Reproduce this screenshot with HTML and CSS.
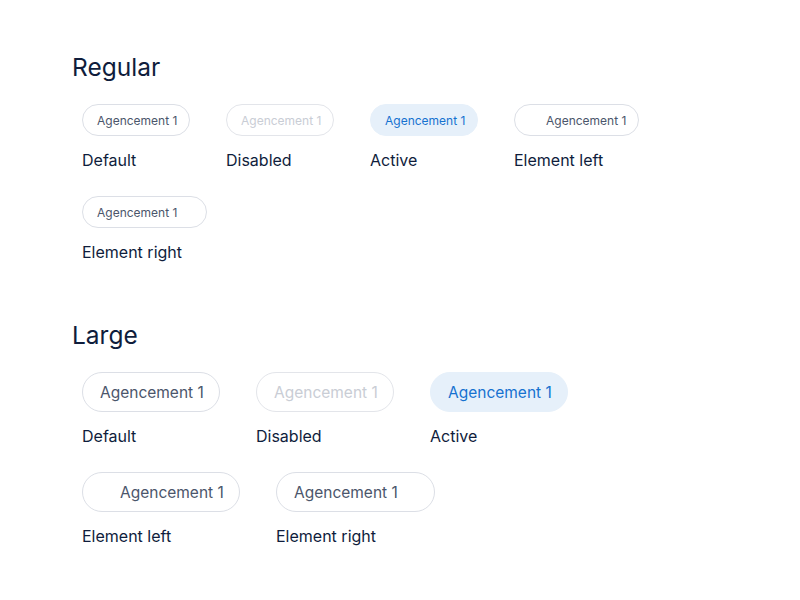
FILE: index.html
```html
<!DOCTYPE html>
<html lang="fr">
<head>
<meta charset="utf-8">
<title>Chips</title>
<link rel="stylesheet" href="styles.css">
</head>
<body>
<main class="page">
  <section class="section">
    <h2 class="title">Regular</h2>
    <div class="grid">
      <div class="item"><span class="chip">Agencement 1</span><span class="label">Default</span></div>
      <div class="item"><span class="chip chip-disabled">Agencement 1</span><span class="label">Disabled</span></div>
      <div class="item"><span class="chip chip-active">Agencement 1</span><span class="label">Active</span></div>
      <div class="item"><span class="chip chip-left">Agencement 1</span><span class="label">Element left</span></div>
      <div class="item"><span class="chip chip-right">Agencement 1</span><span class="label">Element right</span></div>
    </div>
  </section>
  <section class="section section-large">
    <h2 class="title">Large</h2>
    <div class="grid">
      <div class="item"><span class="chip chip-lg">Agencement 1</span><span class="label">Default</span></div>
      <div class="item"><span class="chip chip-lg chip-disabled">Agencement 1</span><span class="label">Disabled</span></div>
      <div class="item"><span class="chip chip-lg chip-active">Agencement 1</span><span class="label">Active</span></div>
      <div class="item"><span class="chip chip-lg chip-left">Agencement 1</span><span class="label">Element left</span></div>
      <div class="item"><span class="chip chip-lg chip-right">Agencement 1</span><span class="label">Element right</span></div>
    </div>
  </section>
</main>
</body>
</html>
```
FILE: styles.css
```css
html, body {
  margin: 0;
  padding: 0;
  background: #ffffff;
}
body {
  font-family: "Inter", "Liberation Sans", sans-serif;
  color: #0f1d3c;
}
.page {
  padding: 51px 72px 0 72px;
}
.section-large {
  margin-top: 57px;
}
.title {
  margin: 0;
  font-size: 24.5px;
  line-height: 32px;
  font-weight: 400;
  color: #0f1d3c;
}
.grid {
  margin-top: 21px;
  padding-left: 10px;
  width: 600px;
  display: flex;
  flex-wrap: wrap;
  column-gap: 36px;
  row-gap: 26px;
}
.item {
  display: flex;
  flex-direction: column;
  align-items: flex-start;
}
.chip {
  box-sizing: border-box;
  display: inline-flex;
  align-items: center;
  justify-content: flex-start;
  width: 108px;
  height: 32px;
  padding: 0 0 0 14px;
  border: 1px solid #dcdfe6;
  border-radius: 16px;
  font-size: 12px;
  color: #4b566b;
  white-space: nowrap;
  background: #fff;
}
.chip-disabled {
  color: #c9cdd5;
  border-color: #e3e5ea;
}
.chip-active {
  background: #e6f0fa;
  border-color: #e6f0fa;
  color: #1672d0;
}
.chip-left {
  width: 125px;
  padding-left: 31px;
}
.chip-right {
  width: 125px;
}
.chip-lg {
  width: 138px;
  height: 40px;
  border-radius: 20px;
  padding-left: 17px;
  font-size: 15.5px;
}
.chip-lg.chip-left {
  width: 158px;
  padding-left: 37px;
}
.chip-lg.chip-right {
  width: 159px;
}
.label {
  margin-top: 14px;
  font-size: 16px;
  line-height: 20px;
  color: #0f1d3c;
}
```
